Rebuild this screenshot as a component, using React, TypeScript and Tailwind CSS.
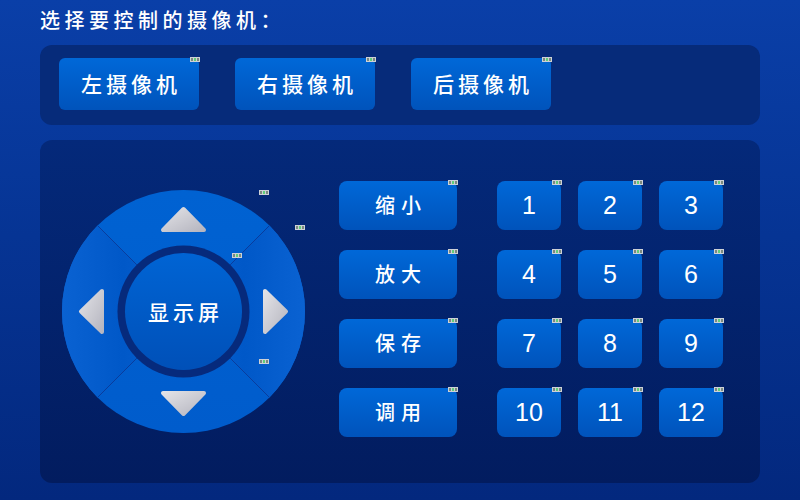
import React from "react";

const cjk = { fontFamily: '"Noto Sans CJK SC", "Noto Sans", sans-serif' };
const num = { fontFamily: '"Liberation Sans", "Noto Sans", sans-serif' };

function Badge({ className = "" }: { className?: string }) {
  return (
    <div
      className={`absolute w-[10px] h-[5px] bg-[#cdd1d6] flex items-center justify-center gap-[1px] ${className}`}
    >
      <span className="w-[2px] h-[3px] border border-[#7a8a80]" />
      <span className="w-[2px] h-[3px] bg-[#5fcf7a]" />
      <span className="w-[2px] h-[3px] border border-[#7a8a80]" />
    </div>
  );
}

function Btn({
  children,
  className = "",
  textClass = "",
}: {
  children: React.ReactNode;
  className?: string;
  textClass?: string;
}) {
  return (
    <div
      className={`relative flex items-center justify-center rounded-[8px] bg-gradient-to-b from-[#0068d8] to-[#0053bb] text-white ${className}`}
    >
      <span className={textClass}>{children}</span>
      <Badge className="-top-[1px] -right-[1px]" />
    </div>
  );
}

function DPad() {
  const c = 121.5;
  const R = 121.5;
  const ri = 66;
  const d = Math.SQRT1_2;
  const lines = [
    [-1, -1],
    [1, -1],
    [1, 1],
    [-1, 1],
  ];
  return (
    <div className="relative w-[243px] h-[243px] shrink-0">
      <svg width="243" height="243" viewBox="0 0 243 243" className="absolute inset-0">
        <defs>
          <linearGradient id="outer" x1="0" y1="0" x2="0" y2="1">
            <stop offset="0" stopColor="#0062d2" />
            <stop offset="1" stopColor="#005ccc" />
          </linearGradient>
          <linearGradient id="side" x1="0" y1="0" x2="1" y2="0">
            <stop offset="0" stopColor="#0a62d2" />
            <stop offset="0.5" stopColor="#0058c8" />
            <stop offset="1" stopColor="#0a62d2" />
          </linearGradient>
          <linearGradient id="inner" x1="0" y1="0" x2="0" y2="1">
            <stop offset="0" stopColor="#0064d4" />
            <stop offset="1" stopColor="#0050b8" />
          </linearGradient>
          <linearGradient id="arrow" x1="0" y1="0" x2="1" y2="1">
            <stop offset="0" stopColor="#e2e2e6" />
            <stop offset="1" stopColor="#b6b6c0" />
          </linearGradient>
        </defs>
        <circle cx={c} cy={c} r={R} fill="url(#outer)" />
        <path
          d={`M ${c} ${c} L ${c - R * d} ${c - R * d} A ${R} ${R} 0 0 0 ${c - R * d} ${c + R * d} Z`}
          fill="url(#side)"
        />
        <path
          d={`M ${c} ${c} L ${c + R * d} ${c - R * d} A ${R} ${R} 0 0 1 ${c + R * d} ${c + R * d} Z`}
          fill="url(#side)"
        />
        {lines.map(([x, y], i) => (
          <line
            key={i}
            x1={c + x * ri * d}
            y1={c + y * ri * d}
            x2={c + x * R * d}
            y2={c + y * R * d}
            stroke="#0a3c9c"
            strokeWidth="1"
          />
        ))}
        <circle cx={c} cy={c} r={ri} fill="#062a7c" />
        <circle cx={c} cy={c} r={58.5} fill="url(#inner)" />
        <g fill="url(#arrow)" stroke="url(#arrow)" strokeWidth="4" strokeLinejoin="round">
          <polygon points="121.5,19 101,40 142,40" />
          <polygon points="121.5,224 101,203 142,203" />
          <polygon points="19,121.5 40,101 40,142" />
          <polygon points="224,121.5 203,101 203,142" />
        </g>
      </svg>
      <div className="absolute inset-0 flex items-center justify-center">
        <span className="text-white text-[21px] font-medium tracking-[4px] pl-[4px]" style={cjk}>
          显示屏
        </span>
      </div>
      <Badge className="left-[197px] top-0" />
      <Badge className="left-[233px] top-[35px]" />
      <Badge className="left-[170px] top-[63px]" />
      <Badge className="left-[197px] top-[169px]" />
    </div>
  );
}

export default function App() {
  const funcs = ["缩小", "放大", "保存", "调用"];
  const nums = ["1", "2", "3", "4", "5", "6", "7", "8", "9", "10", "11", "12"];
  return (
    <div className="w-[800px] h-[500px] overflow-hidden bg-gradient-to-b from-[#0a3fa8] to-[#03287e] px-[40px] pt-[7px]">
      <div className="text-white text-[20px] leading-[26px] tracking-[4.5px] font-medium" style={cjk}>
        选择要控制的摄像机：
      </div>
      <div className="mt-[12px] h-[80px] rounded-[12px] bg-[#062b7a] flex items-start gap-[36px] pl-[19px] pt-[13px]">
        {["左摄像机", "右摄像机", "后摄像机"].map((t) => (
          <Btn
            key={t}
            className="w-[140px] h-[52px] !rounded-[6px]"
            textClass="text-[21px] font-medium tracking-[4px] pl-[4px]"
          >
            <span style={cjk}>{t}</span>
          </Btn>
        ))}
      </div>
      <div className="mt-[15px] h-[343px] rounded-[12px] bg-gradient-to-b from-[#04297a] to-[#021c5f] flex items-start pl-[22px] pt-[41px]">
        <div className="mt-[9px]">
          <DPad />
        </div>
        <div className="ml-[34px] flex flex-col gap-[20px]">
          {funcs.map((f) => (
            <Btn key={f} className="w-[118px] h-[49px]" textClass="text-[20px] font-medium tracking-[6px] pl-[6px]">
              <span style={cjk}>{f}</span>
            </Btn>
          ))}
        </div>
        <div className="ml-[40px] grid grid-cols-[64px_64px_64px] gap-x-[17px] gap-y-[20px]">
          {nums.map((n) => (
            <Btn key={n} className="w-[64px] h-[49px]" textClass="text-[25px]">
              <span style={num}>{n}</span>
            </Btn>
          ))}
        </div>
      </div>
    </div>
  );
}
